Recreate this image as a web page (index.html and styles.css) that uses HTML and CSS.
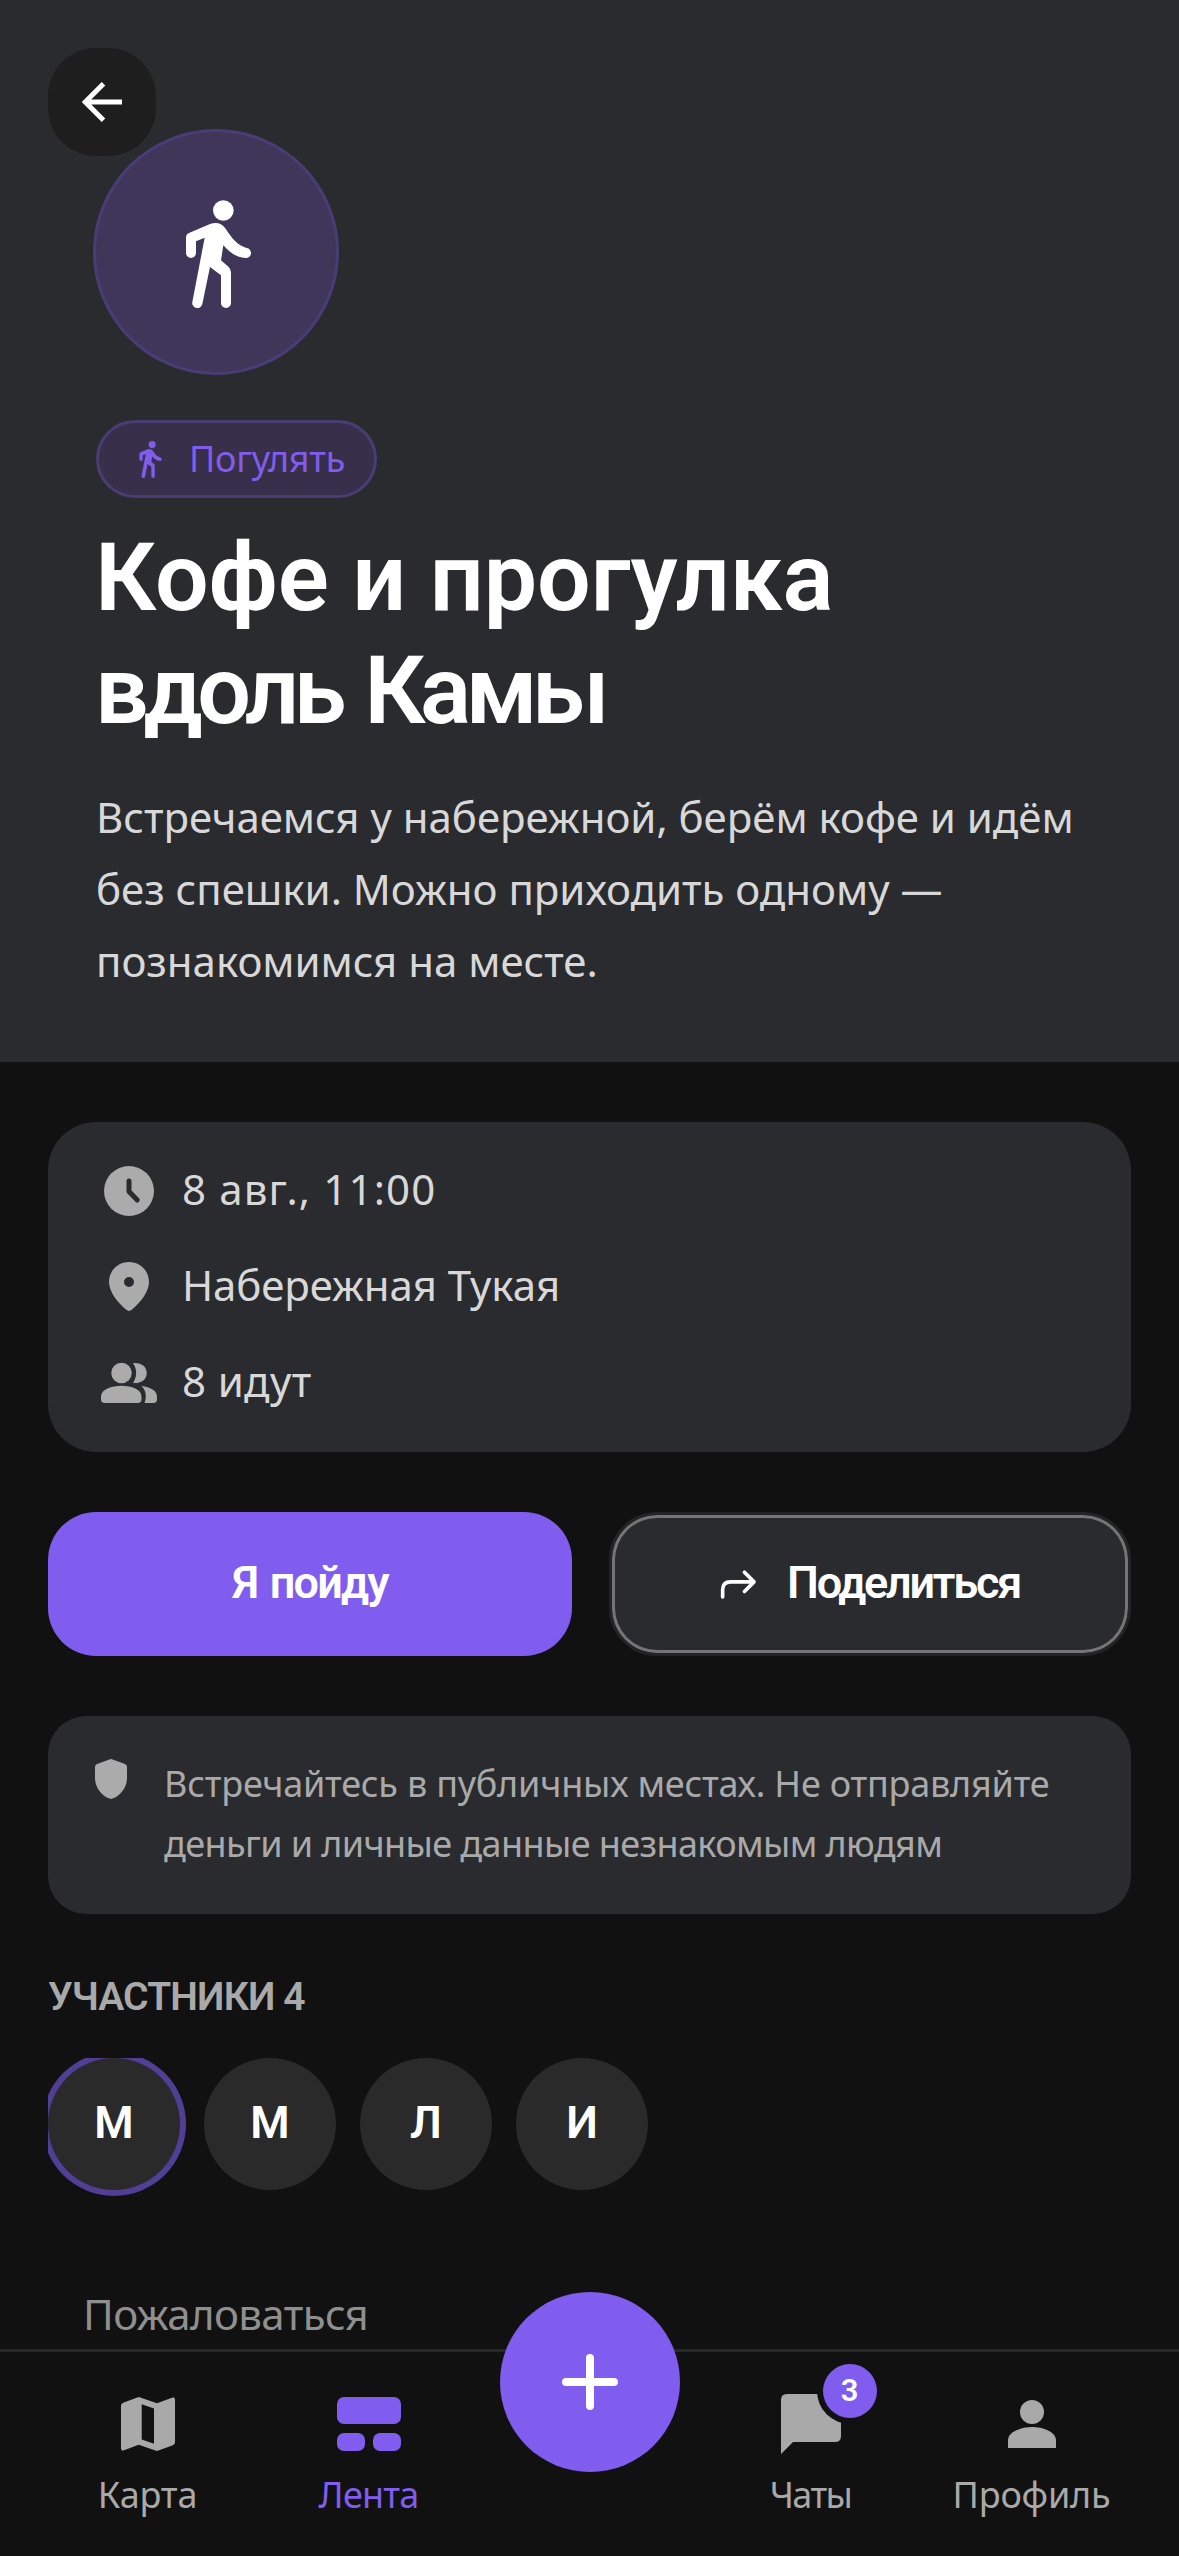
FILE: index.html
```html
<!DOCTYPE html>
<html lang="ru">
<head>
<meta charset="utf-8">
<title>Кофе и прогулка вдоль Камы</title>
<link rel="stylesheet" href="styles.css">
</head>
<body>
<svg class="sprite" aria-hidden="true">
  <symbol id="walk" viewBox="558 597 195 324">
    <circle cx="670" cy="628.500" r="31"/>
    <path d="M558 756V710Q558 700 567 696L630 669Q659 659 676 682C696 713 713 734 740 741A15 15 0 0 1 736 771C710 768 690 757 670 733L663 778L686 798Q693 805 693 814V906A15 15 0 0 1 663 906V823L630 798L607 909A15 15 0 0 1 577 903L614 710L588 721V756A15 15 0 0 1 558 756Z"/>
  </symbol>
</svg>
<div class="screen">
  <header class="hero">
    <button class="back" aria-label="Назад">
      <svg viewBox="0 0 40 40"><path d="M40 20H4M21.500 1.800L3.300 20L21.500 38.200"/></svg>
    </button>
    <div class="emblem"><svg><use href="#walk"/></svg></div>
    <div class="chip"><svg><use href="#walk"/></svg><span>Погулять</span></div>
    <h1>Кофе и прогулка<br><span class="tight">вдоль Камы</span></h1>
    <p class="lead">Встречаемся у набережной, берём кофе и идём<br>без спешки. Можно приходить одному —<br>познакомимся на месте.</p>
  </header>
  <main>
    <section class="card facts">
      <div class="fact">
        <svg viewBox="0 0 24 24"><circle cx="12" cy="12" r="10"/><path class="hands" d="M12 8V12.200L15.300 15.600"/></svg>
        <span class="time">8 авг., 11:00</span>
      </div>
      <div class="fact">
        <svg viewBox="0 0 24 24"><path fill-rule="evenodd" d="M12 2C7.500 2 4 5.500 4 10C4 14 7.500 18.200 10.900 21.100Q12 22 13.100 21.100C16.500 18.200 20 14 20 10C20 5.500 16.500 2 12 2ZM12 8A2 2 0 1 1 12 12A2 2 0 1 1 12 8Z"/></svg>
        <span>Набережная Тукая</span>
      </div>
      <div class="fact">
        <svg viewBox="0 0 24 24"><circle cx="9" cy="8" r="4.100"/><path d="M.8 17.500C.8 14.500 5 13.100 9 13.100S17 14.500 17 17.500V18.500Q17 20 15.500 20H2.300Q.8 20 .8 18.500ZM13.600 4C17 3.700 19.100 5.500 19.100 8S17 12.300 13.600 12C15.300 9.500 15.300 6.500 13.600 4ZM17 13.200C20.500 13.600 23.200 15 23.200 17.500V18.500Q23.200 20 21.700 20H18.200Q18.700 19 18.700 17.300Q18.700 14.800 17 13.200Z"/></svg>
        <span class="going">8 идут</span>
      </div>
    </section>
    <div class="actions">
      <button class="btn primary"><span>Я пойду</span></button>
      <button class="btn outline">
        <svg viewBox="60 85 115 95"><path d="M68 172V150Q68 126 92 126H163M134 97L163 126L134 155"/></svg>
        <span>Поделиться</span>
      </button>
    </div>
    <section class="card note">
      <svg viewBox="0 0 24 24"><path d="M12 2Q12.400 2 12.800 2.200L19 4.500Q20 4.900 20 6V11.500C20 16.500 16.500 20.500 12.700 21.800Q12 22.100 11.300 21.800C7.500 20.500 4 16.500 4 11.500V6Q4 4.900 5 4.500L11.200 2.200Q11.600 2 12 2Z"/></svg>
      <p>Встречайтесь в публичных местах. Не отправляйте<br><span class="second">деньги и личные данные незнакомым людям</span></p>
    </section>
    <h2>УЧАСТНИКИ 4</h2>
    <div class="people">
      <div class="avatar me">М</div>
      <div class="avatar">М</div>
      <div class="avatar">Л</div>
      <div class="avatar">И</div>
    </div>
    <a class="report">Пожаловаться</a>
  </main>
  <nav>
    <a class="tab">
      <svg viewBox="0 0 24 24"><path fill-rule="evenodd" d="M3 5.900Q3 5.200 3.700 4.900L8.900 3L15 5.100L20.200 3.200Q21 3 21 3.800V18.100Q21 18.800 20.300 19.100L15 21L8.900 18.900L3.800 20.800Q3 21 3 20.200ZM9.900 5.400V17.200L14 18.600V6.800Z"/></svg>
      <span>Карта</span>
    </a>
    <a class="tab active">
      <svg viewBox="0 0 72 72"><rect x="4" y="9" width="64" height="27" rx="7"/><rect x="4" y="45" width="28" height="18" rx="7"/><rect x="40" y="45" width="28" height="18" rx="7"/></svg>
      <span>Лента</span>
    </a>
    <div class="slot">
      <button class="fab" aria-label="Создать"><svg viewBox="0 0 56 56"><path d="M28 4V52M4 28H52"/></svg></button>
    </div>
    <a class="tab chats">
      <span class="icon"><svg viewBox="0 0 24 24"><path d="M2 22V4Q2 2 4 2H20Q22 2 22 4V16Q22 18 20 18H6Z"/></svg><b class="badge">3</b></span>
      <span>Чаты</span>
    </a>
    <a class="tab">
      <svg viewBox="0 0 24 24"><circle cx="12" cy="8" r="4"/><path d="M4 20V17.500C4 14.500 8.500 13 12 13S20 14.500 20 17.500V20Z"/></svg>
      <span>Профиль</span>
    </a>
  </nav>
</div>
</body>
</html>
```
FILE: styles.css
```css
* { box-sizing: border-box; }
body { margin: 0; background: #111; font-family: "Noto Sans", sans-serif; }
button { border: 0; padding: 0; font: inherit; color: inherit; }
h1, h2, p { margin: 0; font-weight: 400; }
svg { display: block; fill: currentColor; flex: none; }
.sprite { position: absolute; width: 0; height: 0; }
.screen { width: 1179px; height: 2556px; display: flex; flex-direction: column; overflow: hidden; color: #fff; white-space: nowrap; }

/* Event header */
.hero { position: relative; height: 1062px; flex: none; padding: 129px 96px 0; background: #2a2b2e; }
.back { position: absolute; left: 48px; top: 48px; width: 108px; height: 108px; border-radius: 48px; background: #1e1e1f; display: grid; place-items: center; }
.back svg { width: 40px; height: 40px; fill: none; stroke: #fff; stroke-width: 5px; }
.emblem { position: relative; width: 246px; height: 246px; margin-left: -3px; border: 3px solid #4a3d77; border-radius: 50%; background: #3f365a; display: grid; place-items: center; }
.emblem svg { width: 65px; height: 108px; margin: 3px 0 0 5px; }
.chip { width: 281px; height: 78px; margin-top: 45px; padding: 0 0 2px 40px; border: 3px solid #493d74; border-radius: 39px; background: #382f4a; color: #805dec; display: flex; align-items: center; gap: 27px; font-size: 36px; letter-spacing: -0.27px; }
.chip svg { width: 23px; height: 37px; margin-top: 3px; }
h1 { margin-top: 23px; margin-left: -1px; font-family: Roboto, sans-serif; font-weight: 600; font-size: 95px; line-height: 113px; letter-spacing: -0.1px; }
.tight { letter-spacing: -5.4px; word-spacing: 5px; }
.lead { margin-top: 34px; font-size: 42px; line-height: 72px; letter-spacing: -0.02px; color: #d8d8d9; }

main { flex: 1; min-height: 0; padding: 60px 48px 0; overflow: hidden; }
.card { background: #2a2b2e; }
.facts { height: 330px; padding: 39px 51px; border-radius: 48px; display: flex; flex-direction: column; gap: 36px; color: #d8d8d9; font-size: 42px; letter-spacing: -0.1px; }
.fact { height: 60px; display: flex; align-items: center; gap: 23px; }
.fact svg { width: 60px; height: 60px; color: #ababac; }
.fact span { padding-bottom: 5px; }
.time { letter-spacing: 1.15px; }
.going { letter-spacing: 0.36px; }
.hands { fill: none; stroke: #2a2b2e; stroke-width: 2px; stroke-linecap: round; stroke-linejoin: round; }

.actions { margin-top: 60px; display: grid; grid-template-columns: 524px 522px; gap: 37px; }
.btn { height: 144px; border-radius: 48px; display: flex; align-items: center; justify-content: center; font-family: Roboto, sans-serif; font-weight: 600; font-size: 45px; }
.btn span { padding-bottom: 3px; }
.primary { background: #805dee; letter-spacing: -1.8px; word-spacing: 3px; }
.outline { background: #2a2b2e; border: 3px solid #242426; box-shadow: inset 0 0 0 3px #757578; gap: 29px; letter-spacing: -2.25px; }
.outline svg { width: 38px; height: 32px; fill: none; stroke: #fff; stroke-width: 11px; stroke-linecap: round; stroke-linejoin: round; }

.note { height: 198px; margin-top: 60px; padding: 38px 39px; border-radius: 38px; display: flex; gap: 29px; color: #a9a9aa; font-size: 36px; line-height: 60px; letter-spacing: -0.22px; }
.note svg { width: 48px; height: 48px; margin-top: 1px; color: #ababac; }
.second { letter-spacing: -0.6px; }

h2 { margin-top: 59px; font-family: Roboto, sans-serif; font-weight: 600; font-size: 39px; line-height: 48px; letter-spacing: -0.85px; color: #a9a9a9; }
.people { margin-top: 37px; height: 138px; display: flex; gap: 24px; overflow: hidden; }
.avatar { width: 132px; height: 132px; flex: none; padding-bottom: 3px; border-radius: 50%; background: #2a2a2a; display: flex; align-items: center; justify-content: center; font-family: Roboto, sans-serif; font-size: 45px; font-weight: 600; }
.me { box-shadow: 0 0 0 6px #513f96; }
.report { display: block; margin: 94px 0 0 35px; font-size: 42px; line-height: 48px; letter-spacing: -0.6px; color: #8f8f8f; }

/* Bottom navigation */
nav { height: 207px; flex: none; padding: 36px 37px 0; border-top: 3px solid #272727; display: grid; grid-template-columns: repeat(5, 221px); color: #a9a9a9; font-size: 36px; line-height: 48px; letter-spacing: -0.2px; }
.tab { display: flex; flex-direction: column; align-items: center; gap: 11px; }
.tab svg { width: 72px; height: 72px; }
.active { color: #805dee; letter-spacing: -0.8px; }
.chats { letter-spacing: -1.6px; }
.icon { position: relative; }
.badge { position: absolute; left: 48px; top: -24px; width: 54px; height: 54px; border-radius: 50%; background: #805dee; box-shadow: 0 0 0 6px #111; color: #fff; font-family: Roboto, sans-serif; font-weight: 600; font-size: 31px; line-height: 54px; letter-spacing: 0; text-align: center; }
.slot { position: relative; }
.fab { position: absolute; left: 21px; top: -96px; width: 180px; height: 180px; border-radius: 50%; background: #805dee; display: grid; place-items: center; }
.fab svg { width: 56px; height: 56px; fill: none; stroke: #fff; stroke-width: 8px; stroke-linecap: round; }
```
